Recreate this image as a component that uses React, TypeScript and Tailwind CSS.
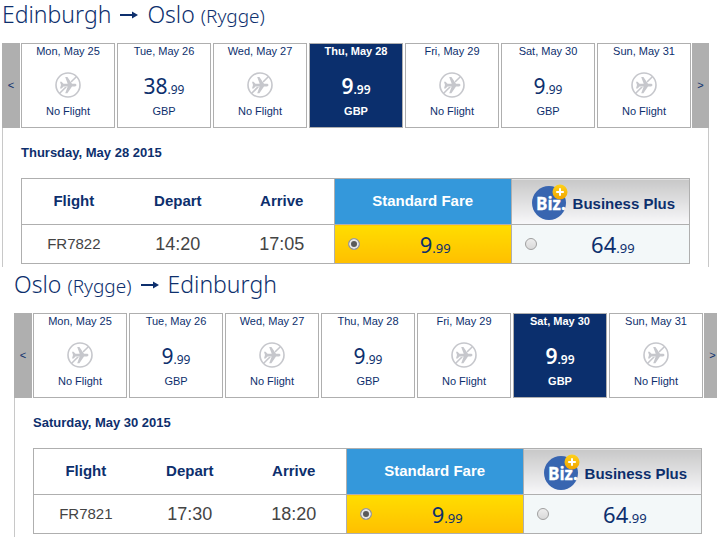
import { useState } from "react"
import clsx from "clsx"

type Day = { label: string; price?: string }

type Place = { name: string; airport?: string }

type Route = {
  id: string
  from: Place
  to: Place
  days: Day[]
  initialDay: number
  date: string
  flight: string
  depart: string
  arrive: string
}

const outbound: Route = {
  id: "outbound",
  from: { name: "Edinburgh" },
  to: { name: "Oslo", airport: "(Rygge)" },
  days: [
    { label: "Mon, May 25" },
    { label: "Tue, May 26", price: "38.99" },
    { label: "Wed, May 27" },
    { label: "Thu, May 28", price: "9.99" },
    { label: "Fri, May 29" },
    { label: "Sat, May 30", price: "9.99" },
    { label: "Sun, May 31" },
  ],
  initialDay: 3,
  date: "Thursday, May 28 2015",
  flight: "FR7822",
  depart: "14:20",
  arrive: "17:05",
}

const inbound: Route = {
  id: "inbound",
  from: { name: "Oslo", airport: "(Rygge)" },
  to: { name: "Edinburgh" },
  days: [
    { label: "Mon, May 25" },
    { label: "Tue, May 26", price: "9.99" },
    { label: "Wed, May 27" },
    { label: "Thu, May 28", price: "9.99" },
    { label: "Fri, May 29" },
    { label: "Sat, May 30", price: "9.99" },
    { label: "Sun, May 31" },
  ],
  initialDay: 5,
  date: "Saturday, May 30 2015",
  flight: "FR7821",
  depart: "17:30",
  arrive: "18:20",
}

function NoFlightIcon() {
  return (
    <svg width="26" height="26" viewBox="0 0 26 26" fill="none" aria-hidden="true">
      <circle cx="13" cy="13" r="12" stroke="#c6c7cc" strokeWidth="1.6" />
      <path d="M4.7 21.3 21.3 4.7" stroke="#c6c7cc" strokeWidth="1.6" />
      <path
        d="M5 9.8h1.6l1.9 2h4.2L10.2 5h2.2l4.6 6.8h2.8c2.2 0 2.2 2.6 0 2.600H17l-4.600 6.800h-2.200l2.500-6.800H8.500l-1.900 2H5l1-3.300z"
        fill="#c6c7cc"
        stroke="#fff"
        strokeWidth="1"
        paintOrder="stroke"
      />
    </svg>
  )
}

function ArrowIcon() {
  return (
    <svg className="mx-2 mt-[10px] self-start" width="20" height="10" viewBox="0 0 20 10" aria-hidden="true">
      <path d="M1 5h14" stroke="#0d2f6d" strokeWidth="2" />
      <path d="M13 1.5 19 5l-6 3.5z" fill="#0d2f6d" />
    </svg>
  )
}

function BizLogo() {
  return (
    <svg width="38" height="36" viewBox="0 0 38 36" aria-hidden="true">
      <defs>
        <linearGradient id="badge" x1="0" y1="0" x2="0" y2="1">
          <stop offset="0" stopColor="#ffd21a" />
          <stop offset="1" stopColor="#f0a400" />
        </linearGradient>
      </defs>
      <circle cx="17" cy="19" r="17" fill="#3865b0" />
      <text
        x="4"
        y="26"
        fill="#fff"
        stroke="#fff"
        strokeWidth="0.3"
        fontSize="17"
        fontWeight="700"
        fontFamily="'Open Sans', sans-serif"
      >
        Biz.
      </text>
      <circle cx="28" cy="8" r="7.5" fill="url(#badge)" />
      <path d="M28 4.2v7.6M24.2 8h7.6" stroke="#fff" strokeWidth="2" />
    </svg>
  )
}

function Price({ value, large }: { value: string; large?: boolean }) {
  const [whole, cents] = value.split(".")
  return (
    <span className={clsx("font-['Noto_Sans',sans-serif]", large ? "text-[22px]" : "pt-[5px] text-[21px]")}>
      {whole}
      <span className={large ? "text-[13px]" : "text-[12px]"}>.{cents}</span>
    </span>
  )
}

function PlaceName({ place }: { place: Place }) {
  return (
    <span>
      {place.name}
      {place.airport && <span className="ml-[6px] text-[19px]">{place.airport}</span>}
    </span>
  )
}

const radioClass =
  "block size-3 appearance-none rounded-full border border-[#a0a0a0] bg-linear-to-b from-[#ededed] to-[#d9d9d9] checked:bg-none checked:bg-[#5a5a5a] checked:shadow-[inset_0_0_0_2px_#e6e6e6]"

function FlightPanel({ route, className }: { route: Route; className?: string }) {
  const [selected, setSelected] = useState(route.initialDay)
  const [fare, setFare] = useState("standard")

  return (
    <section className={className}>
      <h2 className="flex h-[43px] items-baseline font-['Noto_Sans',sans-serif] text-[23px] leading-7 font-light">
        <PlaceName place={route.from} />
        <ArrowIcon />
        <PlaceName place={route.to} />
      </h2>

      {/* Week strip */}
      <div className="flex h-[85px]">
        <button type="button" aria-label="Previous week" className="mr-px w-[18px] bg-[#afafaf] text-[11px]">
          &lt;
        </button>
        <div className="flex flex-1 gap-[2px]">
          {route.days.map((day, i) => (
            <button
              key={day.label}
              type="button"
              onClick={() => setSelected(i)}
              className={clsx(
                "flex min-w-0 flex-1 flex-col items-center border border-[#afafaf] text-[11px] leading-[14px]",
                i === selected ? "bg-[#0b2f6d] font-semibold text-white" : "bg-white",
              )}
            >
              <span>{day.label}</span>
              <span className="mt-[10px] mb-[2px] flex h-[34px] items-center">
                {day.price ? <Price value={day.price} /> : <NoFlightIcon />}
              </span>
              <span>{day.price ? "GBP" : "No Flight"}</span>
            </button>
          ))}
        </div>
        <button type="button" aria-label="Next week" className="ml-px w-[17px] bg-[#afafaf] text-[11px]">
          &gt;
        </button>
      </div>

      <div className="border-x border-[#c8c8c8] pr-[18px] pb-[3px] pl-[18px]">
        <h3 className="py-[15px] text-[13px] leading-5 font-bold">{route.date}</h3>
        <table className="w-full table-fixed border-collapse border border-[#afafaf] text-center">
          <thead>
            <tr className="h-[46px] border-b border-[#afafaf] text-[15px]">
              <th>Flight</th>
              <th>Depart</th>
              <th>Arrive</th>
              <th className="w-[26.5%] border-x border-[#afafaf] bg-[#3498db] text-white">Standard Fare</th>
              <th className="w-[26.7%] bg-linear-to-b from-[#c8c8c8] to-[#f8f8fa]">
                <span className="flex items-center justify-center gap-[3px] pl-[6px]">
                  <BizLogo />
                  <span className="pt-[6px]">Business Plus</span>
                </span>
              </th>
            </tr>
          </thead>
          <tbody>
            <tr className="h-[39px] text-[#444]">
              <td className="text-[15px]">{route.flight}</td>
              <td className="text-[18px]">{route.depart}</td>
              <td className="text-[18px]">{route.arrive}</td>
              <td className="border-x border-[#afafaf] bg-linear-to-b from-[#ffdd00] to-[#ffbf00] text-[#0d2f6d]">
                <label className="flex items-center pl-[13px]">
                  <input
                    type="radio"
                    name={route.id}
                    checked={fare === "standard"}
                    onChange={() => setFare("standard")}
                    className={radioClass}
                  />
                  <span className="flex-1">
                    <Price value="9.99" large />
                  </span>
                </label>
              </td>
              <td className="bg-[#f3f8f9] text-[#0d2f6d]">
                <label className="flex items-center pl-[13px]">
                  <input
                    type="radio"
                    name={route.id}
                    checked={fare === "business"}
                    onChange={() => setFare("business")}
                    className={radioClass}
                  />
                  <span className="flex-1">
                    <Price value="64.99" large />
                  </span>
                </label>
              </td>
            </tr>
          </tbody>
        </table>
      </div>
    </section>
  )
}

export default function App() {
  return (
    <main className="flex flex-col gap-[3px] overflow-x-clip bg-white font-['Liberation_Sans',Arial,sans-serif] text-[#0d2f6d]">
      <FlightPanel route={outbound} className="mr-2 ml-[2px]" />
      {/* The return panel runs slightly past the right edge */}
      <FlightPanel route={inbound} className="-mr-1 ml-[14px]" />
    </main>
  )
}
